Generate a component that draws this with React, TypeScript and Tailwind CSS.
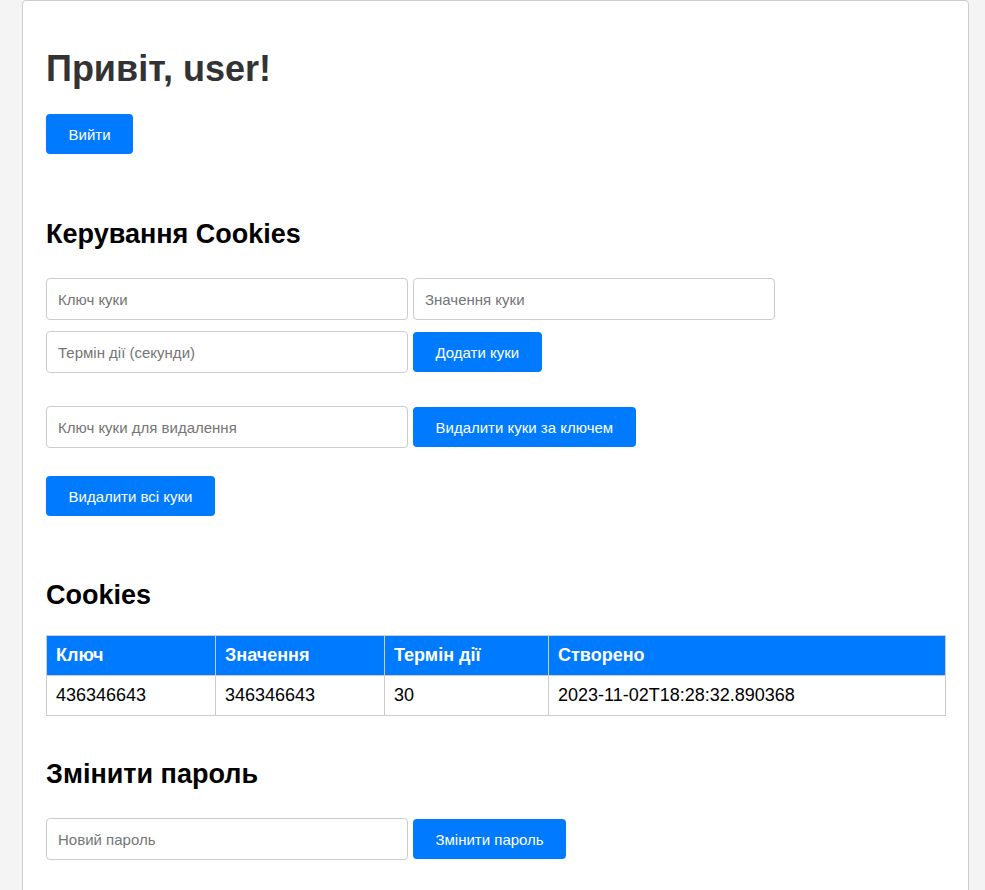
import React from "react";

const inputCls =
  "w-[362px] h-[42px] border border-[#ccc] rounded-[4px] px-[11px] text-[15px] text-[#333] placeholder:text-[#757575] outline-none bg-white";
const btnCls =
  "h-[40px] bg-[#007bff] text-white text-[15px] rounded-[4px] px-[22.5px] leading-none";

export default function App() {
  return (
    <div
      className="min-h-screen bg-[#f4f4f4] pl-[22px]"
      style={{ fontFamily: '"Liberation Sans", Arial, sans-serif' }}
    >
      <div className="w-[947px] bg-white border border-[#ccc] rounded-[4px] px-[23px] pt-[47px] pb-[40px]">
        <h1 className="text-[36px] leading-[41px] font-bold text-[#333]">Привіт, user!</h1>
        <button className={`${btnCls} mt-[25px] h-[39px]`}>Вийти</button>

        <h2 className="mt-[65px] text-[27px] leading-[31px] font-bold text-black">Керування Cookies</h2>
        <div className="mt-[28px] flex gap-[5px]">
          <input className={inputCls} placeholder="Ключ куки" />
          <input className={inputCls} placeholder="Значення куки" />
        </div>
        <div className="mt-[11px] flex gap-[5px] items-center">
          <input className={inputCls} placeholder="Термін дії (секунди)" />
          <button className={btnCls}>Додати куки</button>
        </div>
        <div className="mt-[33px] flex gap-[5px] items-center">
          <input className={inputCls} placeholder="Ключ куки для видалення" />
          <button className={btnCls}>Видалити куки за ключем</button>
        </div>
        <div className="mt-[28px]">
          <button className={`${btnCls} h-[39px]`}>Видалити всі куки</button>
        </div>

        <h2 className="mt-[64px] text-[27px] leading-[31px] font-bold text-black">Cookies</h2>
        <table className="mt-[24px] w-[900px] border-collapse text-[18px]">
          <thead>
            <tr className="bg-[#007bff] text-white">
              <th className="w-[169px] h-[40px] border border-[#ccc] px-[9px] text-left font-bold">Ключ</th>
              <th className="w-[169px] h-[40px] border border-[#ccc] px-[9px] text-left font-bold">Значення</th>
              <th className="w-[164px] h-[40px] border border-[#ccc] px-[9px] text-left font-bold">Термін дії</th>
              <th className="h-[40px] border border-[#ccc] px-[9px] text-left font-bold">Створено</th>
            </tr>
          </thead>
          <tbody>
            <tr className="text-black">
              <td className="h-[40px] border border-[#ccc] px-[9px]">436346643</td>
              <td className="h-[40px] border border-[#ccc] px-[9px]">346346643</td>
              <td className="h-[40px] border border-[#ccc] px-[9px]">30</td>
              <td className="h-[40px] border border-[#ccc] px-[9px]">2023-11-02T18:28:32.890368</td>
            </tr>
          </tbody>
        </table>

        <h2 className="mt-[43px] text-[27px] leading-[31px] font-bold text-black">Змінити пароль</h2>
        <div className="mt-[28px] flex gap-[5px] items-center">
          <input className={inputCls} placeholder="Новий пароль" type="password" />
          <button className={btnCls}>Змінити пароль</button>
        </div>
      </div>
    </div>
  );
}
